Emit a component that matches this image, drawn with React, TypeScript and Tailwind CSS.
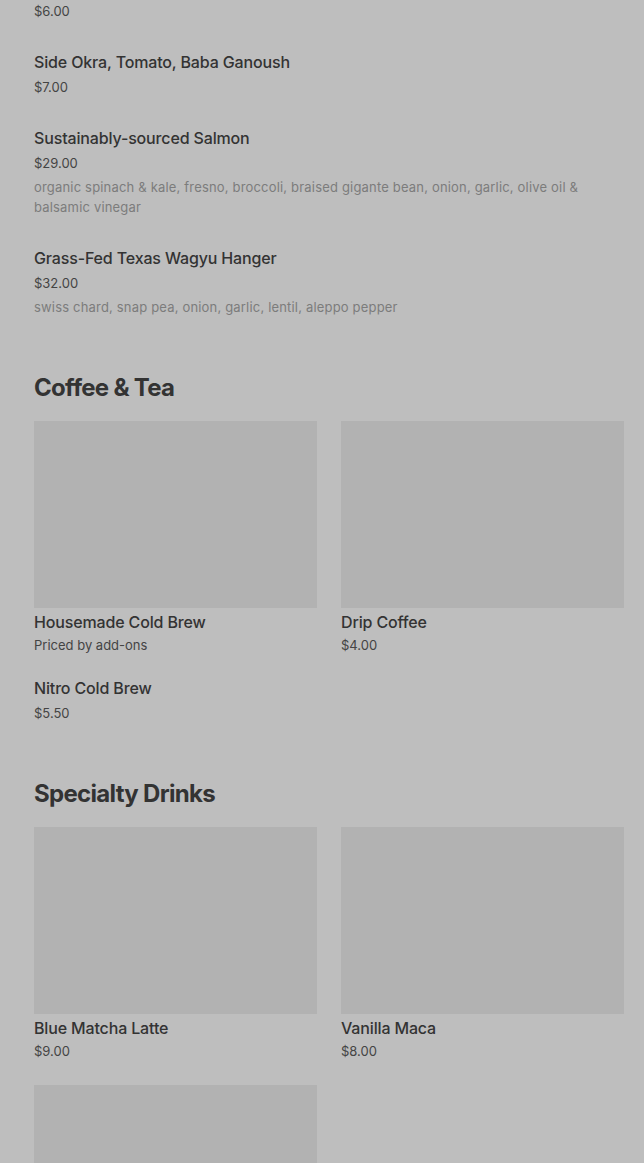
import React from "react";

type Item = { name: string; price: string; desc?: string };

const listItems: Item[] = [
  { name: "Side Okra, Tomato, Baba Ganoush", price: "$7.00" },
  {
    name: "Sustainably-sourced Salmon",
    price: "$29.00",
    desc: "organic spinach & kale, fresno, broccoli, braised gigante bean, onion, garlic, olive oil & balsamic vinegar",
  },
  {
    name: "Grass-Fed Texas Wagyu Hanger",
    price: "$32.00",
    desc: "swiss chard, snap pea, onion, garlic, lentil, aleppo pepper",
  },
];

type Card = { name?: string; price?: string; img: boolean };

function ListItem({ item }: { item: Item }) {
  return (
    <div className="flex flex-col">
      <div className="text-[16px] leading-[24px] font-medium tracking-[-0.15px] text-[#333333]">{item.name}</div>
      <div className="mt-[3px] text-[13px] leading-[20px] text-[#444444]">{item.price}</div>
      {item.desc && (
        <div className="mt-[4px] text-[13px] leading-[20px] tracking-[0.18px] text-[#7c7c7c]">{item.desc}</div>
      )}
    </div>
  );
}

function CardItem({ card }: { card: Card }) {
  return (
    <div className="flex flex-col">
      {card.img && <div className="mt-[3px] mb-[2px] h-[187px] w-full bg-[#b2b2b2]" />}
      {card.name && (
        <div className="text-[16px] leading-[24px] font-medium tracking-[-0.15px] text-[#333333]">{card.name}</div>
      )}
      {card.price && (
        <div
          className={
            card.img
              ? "mt-[1px] text-[13px] leading-[20px] text-[#444444]"
              : "mt-[3px] text-[13px] leading-[20px] text-[#444444]"
          }
        >
          {card.price}
        </div>
      )}
    </div>
  );
}

function Section({ title, cards }: { title: string; cards: Card[] }) {
  return (
    <div className="flex flex-col">
      <h2 className="text-[24px] leading-[32px] font-bold tracking-[-0.7px] text-[#333333]">{title}</h2>
      <div className="mt-[14px] grid grid-cols-2 gap-x-[24px] gap-y-[21px]">
        {cards.map((c, i) => (
          <CardItem key={i} card={c} />
        ))}
      </div>
    </div>
  );
}

export default function App() {
  return (
    <div
      className="min-h-[1163px] w-full overflow-hidden bg-[#bebebe] pl-[34px] pr-[20px]"
      style={{ fontFamily: "Inter, 'Noto Sans', sans-serif" }}
    >
      <div className="flex flex-col">
        <div className="mt-[1px] text-[13px] leading-[20px] text-[#444444]">$6.00</div>
        <div className="mt-[29px] flex flex-col gap-[29px]">
          {listItems.map((it) => (
            <ListItem key={it.name} item={it} />
          ))}
        </div>
        <div className="mt-[55px]">
          <Section
            title="Coffee & Tea"
            cards={[
              { name: "Housemade Cold Brew", price: "Priced by add-ons", img: true },
              { name: "Drip Coffee", price: "$4.00", img: true },
              { name: "Nitro Cold Brew", price: "$5.50", img: false },
            ]}
          />
        </div>
        <div className="mt-[55px]">
          <Section
            title="Specialty Drinks"
            cards={[
              { name: "Blue Matcha Latte", price: "$9.00", img: true },
              { name: "Vanilla Maca", price: "$8.00", img: true },
              { img: true },
            ]}
          />
        </div>
      </div>
    </div>
  );
}
